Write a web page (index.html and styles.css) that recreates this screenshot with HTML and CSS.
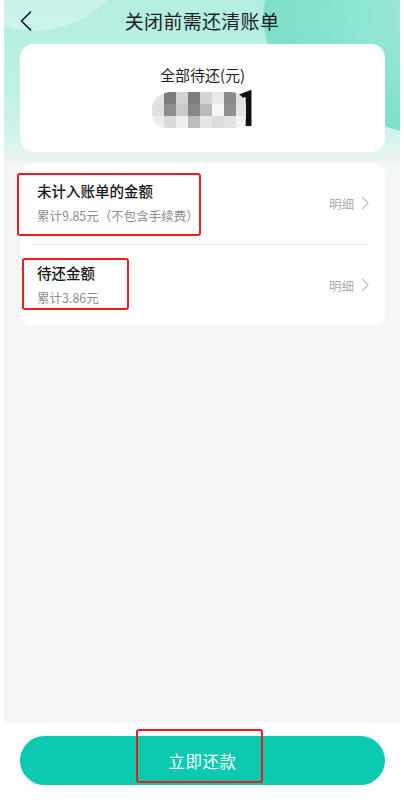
FILE: index.html
```html
<!DOCTYPE html>
<html lang="zh-CN">
<head>
<meta charset="UTF-8">
<meta name="viewport" content="width=device-width,initial-scale=1">
<title>关闭前需还清账单</title>
<link rel="stylesheet" href="styles.css">
</head>
<body>
<div class="screen">

  <!-- top area -->
  <div class="top">
    <header class="bar">
      <svg class="back" width="14" height="20" viewBox="0 0 14 20" aria-hidden="true">
        <path d="M11.5 1 L2.5 10 L11.5 19" fill="none" stroke="#1a1a1a" stroke-width="1.7" stroke-linecap="round" stroke-linejoin="round"/>
      </svg>
      <h1>关闭前需还清账单</h1>
    </header>

    <section class="summary">
      <p class="summary-label">全部待还(元)</p>
      <div class="amount">
        <div class="mosaic">
          <i style="background:#e4e4e4"></i><i style="background:#7b7b7b"></i><i style="background:#d2d2d2"></i><i style="background:#7e7e7e"></i><i style="background:#d4d4d4"></i><i style="background:#e9e9e9"></i><i style="background:#8a8a8a"></i><i style="background:#e2e2e2"></i>
          <i style="background:#e0e0e0"></i><i style="background:#8d8d8d"></i><i style="background:#cacaca"></i><i style="background:#868686"></i><i style="background:#bababa"></i><i style="background:#f4f4f4"></i><i style="background:#8f8f8f"></i><i style="background:#e6e6e6"></i>
          <i style="background:#ececec"></i><i style="background:#dadada"></i><i style="background:#efefef"></i><i style="background:#bcbcbc"></i><i style="background:#e6e6e6"></i><i style="background:#dcdcdc"></i><i style="background:#e2e2e2"></i><i style="background:#f2f2f2"></i>
        </div>
        <span class="digit">1</span>
      </div>
    </section>
  </div>

  <!-- bill rows -->
  <section class="list">
    <div class="row">
      <div class="row-text">
        <h2>未计入账单的金额</h2>
        <p>累计9.85元（不包含手续费）</p>
      </div>
      <a class="more">明细<svg width="8" height="14" viewBox="0 0 8 14"><path d="M1 1 L7 7 L1 13" fill="none" stroke="#bdbdbd" stroke-width="1.2"/></svg></a>
      <span class="mark mark-one"></span>
    </div>
    <div class="divider"></div>
    <div class="row">
      <div class="row-text">
        <h2>待还金额</h2>
        <p>累计3.86元</p>
      </div>
      <a class="more">明细<svg width="8" height="14" viewBox="0 0 8 14"><path d="M1 1 L7 7 L1 13" fill="none" stroke="#bdbdbd" stroke-width="1.2"/></svg></a>
      <span class="mark mark-two"></span>
    </div>
  </section>

  <div class="fill"></div>

  <footer class="foot">
    <button class="pay">立即还款</button>
    <span class="mark mark-three"></span>
  </footer>

</div>
</body>
</html>
```

FILE: styles.css
```css
/* ---------- base ---------- */
*{box-sizing:border-box}
html,body{margin:0;background:#fff}
body{font-family:"Noto Sans CJK SC","Noto Sans",sans-serif;color:#1c1c1c}
.screen{
  margin:0 4px;height:806px;
  display:flex;flex-direction:column;
  background:#f4f5f7;
}

/* ---------- top gradient area ---------- */
.top{
  padding-bottom:11px;
  background:
    radial-gradient(circle at 30px -72px,rgba(255,255,255,.3) 0 102px,transparent 103px),
    radial-gradient(220px 122px at 478px 18px,#a6ecdc 0,#86e2cd 75%,#7fdfc9 99%,transparent 100%),
    linear-gradient(180deg,#b2eee0 0,#bff1e6 90px,#d2f3ec 135px,#e6f3f0 155px,#f4f5f7 170px);
}
.bar{position:relative;height:40px;display:flex;align-items:center;justify-content:center}
.bar h1{margin:0;font-size:19px;font-weight:400;color:#1e1e1e;letter-spacing:.3px}
.back{position:absolute;left:15px;top:11px}

.summary{
  margin:4px 15px 0 16px;height:108px;
  background:#fff;border-radius:14px;
  display:flex;flex-direction:column;align-items:center;
  padding-top:21px;
}
.summary-label{margin:0;font-size:15px;line-height:20px;color:#1e1e1e}
.amount{display:flex;align-items:flex-end;margin-top:5px;margin-left:8px}
.mosaic{
  position:relative;z-index:1;
  display:grid;grid-template-columns:12px repeat(6,12px) 10px;grid-auto-rows:12px;
  border-radius:20px 16px 12px 14px / 16px 14px 12px 14px;overflow:hidden;
}
.mosaic i{display:block}
.digit{font:500 50px/38px Roboto,sans-serif;color:#111;margin-left:-13px}

/* ---------- list ---------- */
.list{
  margin:0 15px 0 16px;background:#fff;border-radius:12px;
}
.row{position:relative;display:flex;align-items:center;justify-content:space-between;padding:18px 16px 20px 17px}
.row h2{margin:0;font-size:14.5px;line-height:20px;font-weight:500;color:#151515}
.row p{margin:7px 0 0;font-size:12.5px;line-height:16px;color:#8e8e8e}
.more{display:flex;align-items:center;gap:7px;font-size:12.5px;color:#ababab;padding-top:1px}
.divider{height:1px;background:#eeeeee;margin:0 17px 0 13px}

/* ---------- annotation marks ---------- */
.mark{position:absolute;border:2.5px solid #f01c1c;border-radius:3px;pointer-events:none}
.mark-one{left:-3px;top:10px;width:184px;height:63px}
.mark-two{left:2px;top:13px;width:107px;height:52px}
.mark-three{left:136px;top:7px;width:127px;height:54px}

/* ---------- bottom ---------- */
.fill{flex:1}
.foot{position:relative;height:84px;background:#fff;margin:0 -4px;padding:14px 19px 0 20px}
.pay{
  display:block;width:100%;height:49px;border:none;border-radius:25px;
  background:#0bcaaf;color:#fff;font:400 16.5px "Noto Sans CJK SC",sans-serif;letter-spacing:.5px;
}
```
